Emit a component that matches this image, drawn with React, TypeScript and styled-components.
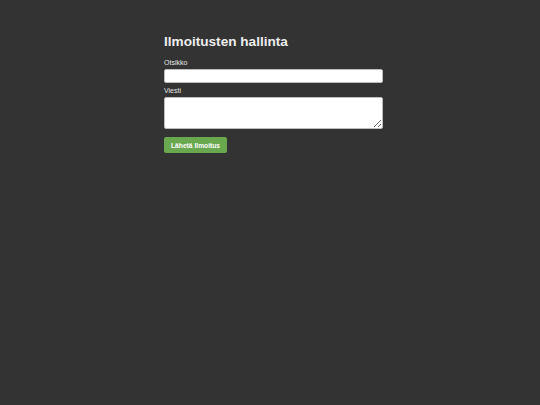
import styled, { createGlobalStyle } from "styled-components";

const GlobalStyle = createGlobalStyle`
    * {
        margin: 0;
        padding: 0;
        box-sizing: border-box;
    }
    html, body {
        background-color: #333333;
        font-family: "Liberation Sans", Arial, sans-serif;
    }
`

const Page = styled.div`
    min-height: 405px;
    padding-top: 34px;
`

const Form = styled.form`
    width: 219px;
    margin-left: 164px;
    display: flex;
    flex-direction: column;
`

const Title = styled.h2`
    font-size: 13.6px;
    line-height: 16px;
    font-weight: bold;
    color: #eeeeee;
    margin-bottom: 8.6px;
`

const Label = styled.label<{ gap?: string }>`
    display: block;
    font-size: 7px;
    line-height: 8px;
    color: #e6e6e6;
    margin-top: ${props => props.gap ? props.gap : '0'};
    margin-bottom: 2px;
`

const Input = styled.input`
    display: block;
    width: 100%;
    height: 14px;
    background: #ffffff;
    border: 1px solid #bdbdbd;
    border-radius: 2px;
    font-size: 7px;
`

const TextArea = styled.textarea`
    display: block;
    width: 100%;
    height: 32px;
    background: #ffffff;
    border: 1px solid #bdbdbd;
    border-radius: 2px;
    font-size: 7px;
`

const Button = styled.button`
    align-self: flex-start;
    margin-top: 8px;
    height: 16px;
    padding: 0 7px;
    background-color: #6aa84f;
    color: #ffffff;
    border: none;
    border-radius: 2px;
    font-family: "Liberation Sans", Arial, sans-serif;
    font-size: 6.7px;
    font-weight: bold;
`

export default () => {
    return (
        <>
            <GlobalStyle />
            <Page>
                <Form onSubmit={e => e.preventDefault()}>
                    <Title>Ilmoitusten hallinta</Title>
                    <Label>Otsikko</Label>
                    <Input type="text" />
                    <Label gap="4.5px">Viesti</Label>
                    <TextArea />
                    <Button type="submit">Lähetä Ilmoitus</Button>
                </Form>
            </Page>
        </>
    )
}
